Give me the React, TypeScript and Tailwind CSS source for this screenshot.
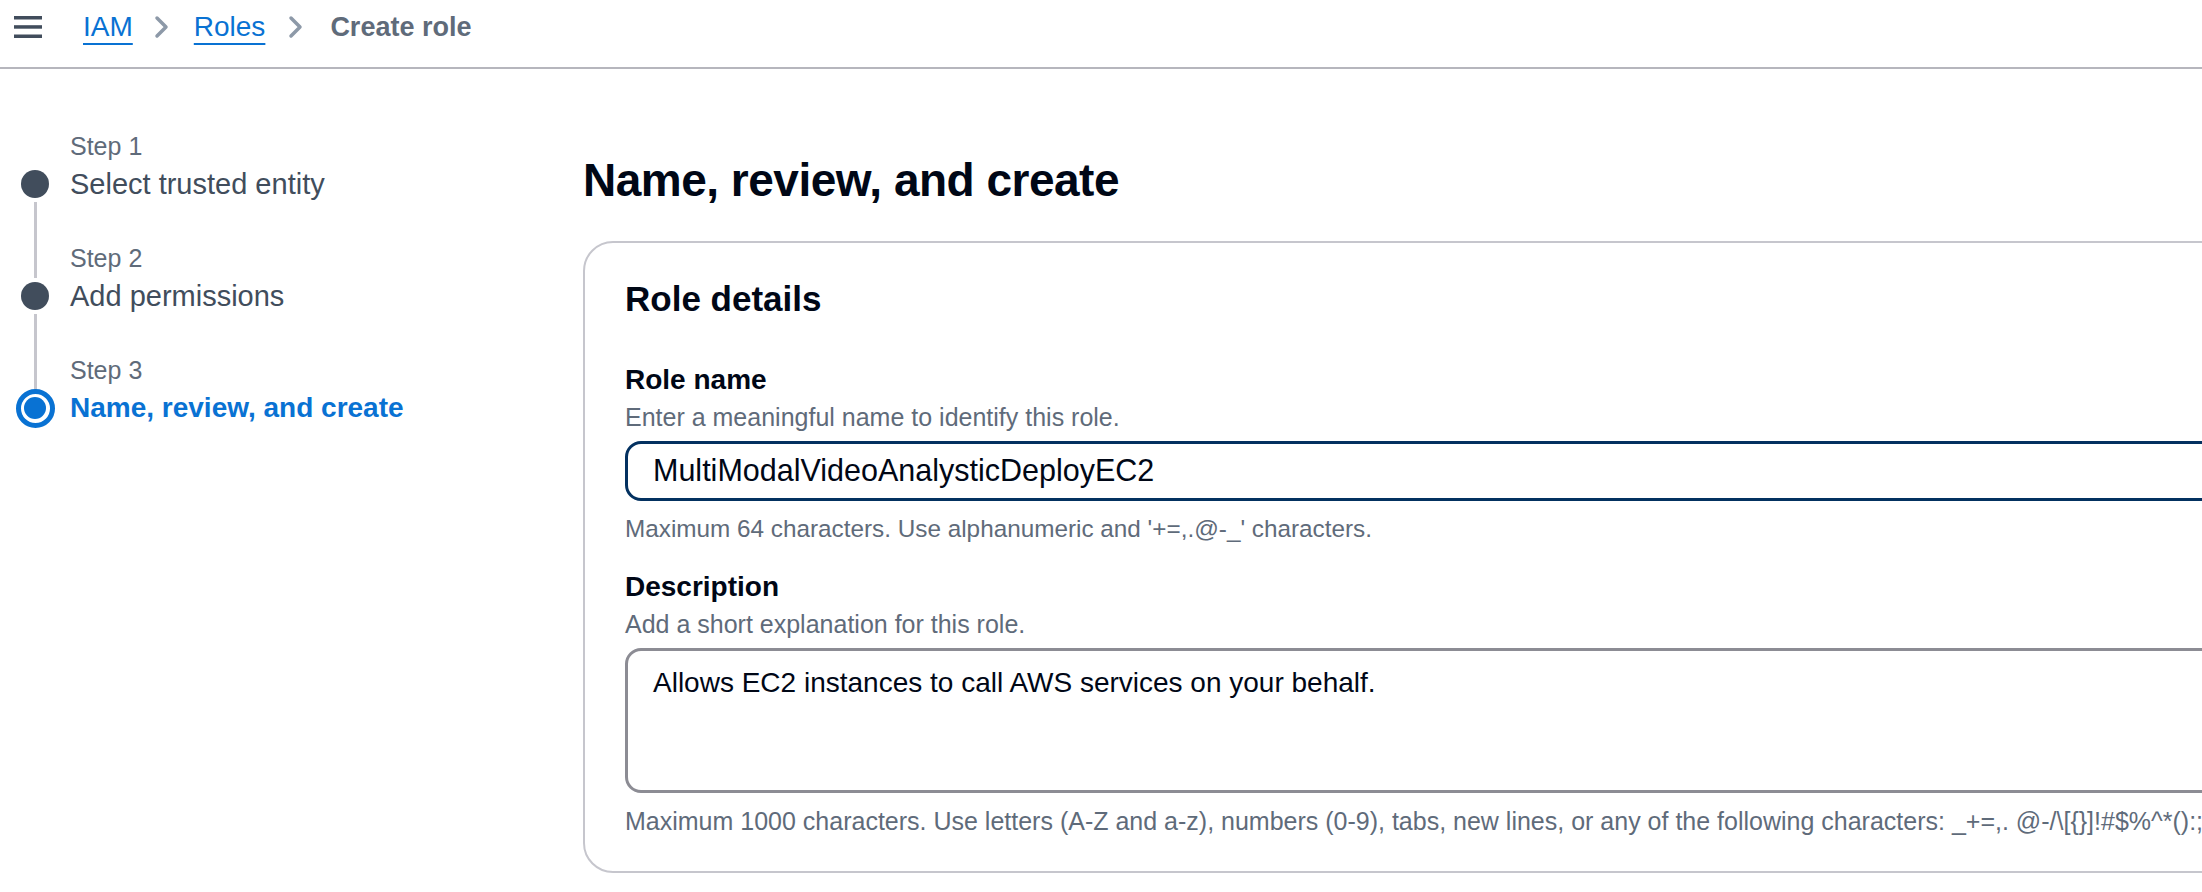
import { ReactNode } from "react";

const font = { fontFamily: '"Liberation Sans", Arial, sans-serif' };

function Chevron() {
  return (
    <svg width="18" height="24" viewBox="0 0 18 24" className="shrink-0">
      <polyline points="4,3 13,12 4,21" fill="none" stroke="#8d99a8" strokeWidth="3.5" strokeLinecap="round" strokeLinejoin="round" />
    </svg>
  );
}

function Step({ n, title, done, last }: { n: number; title: string; done: boolean; last?: boolean }) {
  return (
    <div className="flex">
      {/* dot + connector */}
      <div className="w-[42px] flex flex-col items-center">
        <div className={`h-[37px] w-[3px] ${n === 1 ? "bg-transparent" : "bg-[#c6c6cd]"}`} />
        <div className="h-[36px] flex items-center justify-center">
          {done ? (
            <div className="w-[28px] h-[28px] rounded-full bg-[#414d5c]" />
          ) : (
            <div className="w-[39px] h-[39px] rounded-full border-[5px] border-[#0972d3] flex items-center justify-center shrink-0">
              <div className="w-[22px] h-[22px] rounded-full bg-[#0972d3]" />
            </div>
          )}
        </div>
        <div className={`h-[39px] w-[3px] ${last ? "bg-transparent" : "bg-[#c6c6cd]"}`} />
      </div>
      <div className="ml-[14px] flex flex-col">
        <div className="text-[25px] leading-[34px] text-[#5f6b7a]">Step {n}</div>
        <div
          className={`leading-[42px] whitespace-nowrap ${
            done ? "text-[29px] text-[#414d5c]" : "text-[28px] text-[#0972d3] font-bold"
          }`}
        >
          {title}
        </div>
      </div>
    </div>
  );
}

function Field({
  label,
  hint,
  children,
  note,
  wide,
}: {
  label: string;
  hint: string;
  children: ReactNode;
  note: string;
  wide?: boolean;
}) {
  return (
    <div className="flex flex-col">
      <div className="text-[28px] leading-[42px] font-bold text-[#000716]">{label}</div>
      <div className="text-[25px] leading-[34px] text-[#5f6b7a] -mt-[1px]">{hint}</div>
      <div className="mt-[7px]">{children}</div>
      <div
        className={`mt-[11px] leading-[34px] text-[#5f6b7a] whitespace-nowrap ${
          wide ? "text-[25px]" : "text-[24.3px]"
        }`}
      >
        {note}
      </div>
    </div>
  );
}

export default function App() {
  return (
    <div className="w-[2202px] h-[892px] overflow-hidden bg-white" style={font}>
      {/* BREADCRUMB BAR */}
      <header className="h-[69px] border-b-2 border-[#b6b6bd] flex items-start pt-[10px]">
        <div className="flex items-center h-[34px]">
          <svg width="28" height="22" viewBox="0 0 28 22" className="ml-[14px]">
            <rect x="0" y="0" width="28" height="3.5" fill="#414d5c" />
            <rect x="0" y="9.2" width="28" height="3.5" fill="#414d5c" />
            <rect x="0" y="18.5" width="28" height="3.5" fill="#414d5c" />
          </svg>
          <a className="ml-[41px] text-[28px] text-[#0972d3] underline decoration-2 underline-offset-[7px]">IAM</a>
          <div className="ml-[20px] mr-[23px]">
            <Chevron />
          </div>
          <a className="text-[28px] text-[#0972d3] underline decoration-2 underline-offset-[7px]">Roles</a>
          <div className="ml-[22px] mr-[25px]">
            <Chevron />
          </div>
          <span className="text-[27px] font-bold text-[#5f6b7a]">Create role</span>
        </div>
      </header>

      <div className="flex">
        {/* STEPS NAV */}
        <nav className="w-[583px] shrink-0 pl-[14px] pt-[60px]">
          <Step n={1} title="Select trusted entity" done />
          <Step n={2} title="Add permissions" done />
          <Step n={3} title="Name, review, and create" done={false} last />
        </nav>

        {/* MAIN */}
        <main className="w-[1720px] shrink-0 pt-[83px]">
          <h1 className="text-[46px] leading-[56px] font-bold text-[#000716] tracking-[-0.5px]">Name, review, and create</h1>

          <section className="mt-[33px] border-2 border-[#c6c6cd] rounded-[30px] pl-[40px] pr-[40px] pt-[33px] pb-[33px]">
            <h2 className="text-[35px] leading-[46px] font-bold text-[#000716]">Role details</h2>

            <div className="mt-[37px]">
              <Field
                label="Role name"
                hint="Enter a meaningful name to identify this role."
                note="Maximum 64 characters. Use alphanumeric and '+=,.@-_' characters."
              >
                <div className="h-[60px] border-[3px] border-[#033160] rounded-[16px] flex items-center pl-[25px] text-[30.5px] text-[#000716]">
                  MultiModalVideoAnalysticDeployEC2
                </div>
              </Field>
            </div>

            <div className="mt-[20px]">
              <Field
                label="Description"
                hint="Add a short explanation for this role."
                wide
                note={`Maximum 1000 characters. Use letters (A-Z and a-z), numbers (0-9), tabs, new lines, or any of the following characters: _+=,. @-/\\[{}]!#$%^*():;"'<>?`}
              >
                <div className="h-[145px] border-[3px] border-[#8c8c94] rounded-[16px] pl-[25px] pt-[12px] text-[28px] leading-[40px] text-[#000716]">
                  Allows EC2 instances to call AWS services on your behalf.
                </div>
              </Field>
            </div>
          </section>
        </main>
      </div>
    </div>
  );
}
